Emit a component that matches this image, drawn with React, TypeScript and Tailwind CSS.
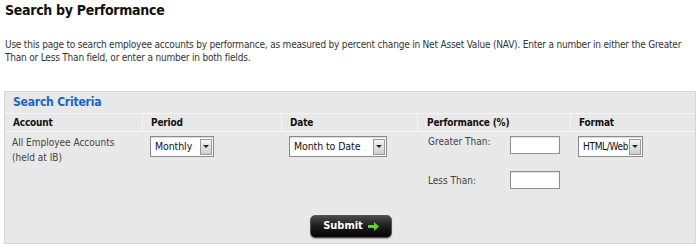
import React from "react";

function Select({ label, width, small }: { label: string; width: string; small?: boolean }) {
  return (
    <div className={`flex h-[21px] items-center border border-[#8a8a8a] bg-white pl-[4px] pr-[1px] shadow-[inset_0_1px_1px_rgba(0,0,0,0.15)] ${width}`}>
      <span className={`flex-1 overflow-hidden whitespace-nowrap text-[#111] ${small ? "text-[10px] tracking-[-0.3px]" : "text-[10.5px] tracking-[-0.1px]"}`}>{label}</span>
      <span className="flex h-[16px] w-[12px] shrink-0 items-center justify-center border border-[#9a9a9a] bg-gradient-to-b from-[#f4f4f4] to-[#cfcfcf]">
        <svg width="6" height="3" viewBox="0 0 6 3"><path d="M0 0h6L3 3z" fill="#222" /></svg>
      </span>
    </div>
  );
}

function Input() {
  return <div className="h-[18px] w-[50px] border border-[#8f8f8f] bg-white shadow-[inset_0_1px_1px_rgba(0,0,0,0.12)]" />;
}

export default function App() {
  return (
    <div className="h-[250px] w-[700px] bg-white text-[#333]" style={{ fontFamily: '"DejaVu Sans Condensed", "DejaVu Sans", sans-serif' }}>
      <div className="px-[5px] pt-[1px]">
        <h1 className="text-[14px] font-bold leading-[18px] tracking-[-0.3px] text-[#111]">Search by Performance</h1>
        <p className="mt-[19px] whitespace-nowrap text-[10px] leading-[13px] tracking-[-0.2px] text-[#333]">
          Use this page to search employee accounts by performance, as measured by percent change in Net Asset Value (NAV). Enter a number in either the Greater
          <br />
          Than or Less Than field, or enter a number in both fields.
        </p>
      </div>
      <div className="mx-[4px] mt-[27px] h-[153px] border border-[#d6d6d6] bg-[#e8e8e8]">
        <div className="border-b border-[#f5f5f5] px-[8px] pb-[3px] pt-[2px] text-[12px] font-bold leading-[16px] tracking-[-0.2px] text-[#1b63c6]">Search Criteria</div>
        <div className="grid grid-cols-[138px_139px_136px_153px_1fr] border-b border-[#f5f5f5] text-[10px] font-bold leading-[17px] tracking-[-0.2px] text-[#111]">
          <div className="border-r border-[#f5f5f5] pl-[8px]">Account</div>
          <div className="border-r border-[#f5f5f5] pl-[8px]">Period</div>
          <div className="border-r border-[#f5f5f5] pl-[8px]">Date</div>
          <div className="border-r border-[#f5f5f5] pl-[9px]">Performance (%)</div>
          <div className="pl-[8px]">Format</div>
        </div>
        <div className="grid grid-cols-[138px_139px_136px_153px_1fr] pt-[4px]">
          <div className="pl-[7px] text-[10px] leading-[15px] text-[#444]">
            <div className="-mt-[1px]">
              All Employee Accounts
              <br />
              (held at IB)
            </div>
          </div>
          <div className="pl-[7px]">
            <Select label="Monthly" width="w-[64px]" />
          </div>
          <div className="pl-[7px]">
            <Select label="Month to Date" width="w-[98px]" />
          </div>
          <div className="pl-[10px] text-[10px] text-[#444]">
            <div className="flex items-start">
              <span className="-mt-[2px] w-[82px] leading-[15px]">Greater Than:</span>
              <Input />
            </div>
            <div className="mt-[17px] flex items-center">
              <span className="w-[82px] leading-[15px]">Less Than:</span>
              <Input />
            </div>
          </div>
          <div className="pl-[7px]">
            <Select label="HTML/Web" width="w-[65px]" small />
          </div>
        </div>
        <div className="mt-[26px] flex justify-center pl-[2px]">
          <button className="flex h-[23px] w-[82px] items-center justify-center gap-[5px] rounded-[5px] border border-[#555] bg-gradient-to-b from-[#4a4a4a] via-[#1c1c1c] to-[#050505] text-[11px] font-bold text-white shadow-[0_1px_1px_rgba(0,0,0,0.3)]">
            Submit
            <svg width="11" height="9" viewBox="0 0 11 9"><path d="M0 3h6V0l5 4.5L6 9V6H0z" fill="#5fd12a" /></svg>
          </button>
        </div>
      </div>
    </div>
  );
}
